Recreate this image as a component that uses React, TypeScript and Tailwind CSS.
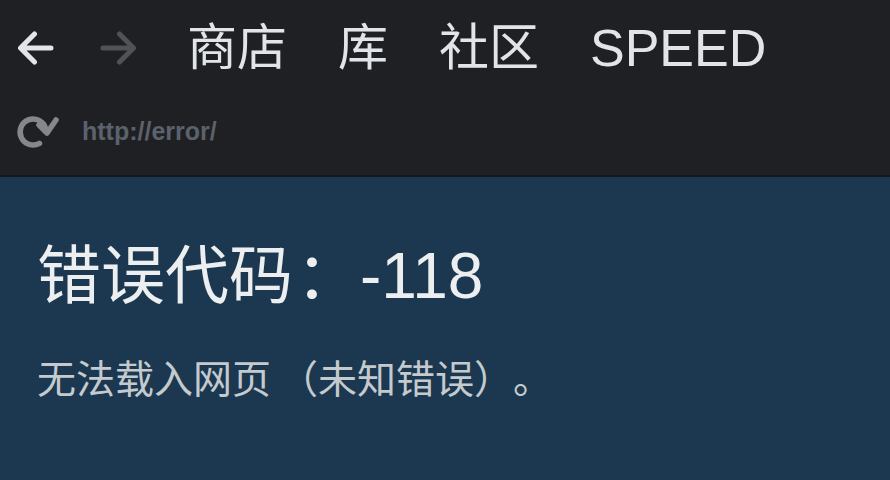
import React from 'react'

// ── Icons ─────────────────────────────────────────────────────────────────
function ArrowLeft({ className }: { className?: string }) {
  return (
    <svg viewBox="0 0 37 38" className={className} fill="none">
      <path
        d="M34 19H4M17.5 5L3.5 19L17.5 33"
        stroke="currentColor"
        strokeWidth="5"
        strokeLinecap="round"
        strokeLinejoin="round"
      />
    </svg>
  )
}

function ArrowRight({ className }: { className?: string }) {
  return (
    <svg viewBox="0 0 37 38" className={className} fill="none">
      <path
        d="M3 19H33M19.5 5L33.5 19L19.5 33"
        stroke="currentColor"
        strokeWidth="5"
        strokeLinecap="round"
        strokeLinejoin="round"
      />
    </svg>
  )
}

// clockwise reload: arc from lower right round to 3 o'clock, V head on the right
function Refresh({ className }: { className?: string }) {
  return (
    <svg viewBox="0 0 50 50" className={className} fill="none">
      <path
        d="M29.5 37.3A13 13 0 1 1 35.5 22"
        stroke="currentColor"
        strokeWidth="5.5"
        strokeLinecap="round"
      />
      <path
        d="M29 19L37 27L46 14"
        stroke="currentColor"
        strokeWidth="5.5"
        strokeLinecap="round"
        strokeLinejoin="round"
      />
    </svg>
  )
}

// ── Page ──────────────────────────────────────────────────────────────────
export default function App() {
  return (
    <div
      className="flex h-[480px] w-[890px] flex-col overflow-hidden bg-[#1b3850] [text-spacing-trim:space-all]"
      style={{ fontFamily: '"Liberation Sans", "Noto Sans CJK SC", sans-serif' }}
    >
      {/* Top bar */}
      <div className="h-[177px] shrink-0 border-b-2 border-[#15171a] bg-[#1f2023]">
        <div className="flex h-[96px] items-center pl-[17px]">
          <ArrowLeft className="h-[38px] w-[37px] text-[#e4e5e6]" />
          <ArrowRight className="ml-[46px] h-[38px] w-[37px] text-[#505255]" />
          <nav className="ml-[50px] flex items-center gap-[51px] text-[50px] leading-none text-[#e1e5e9]">
            <span>商店</span>
            <span>库</span>
            <span>社区</span>
            <span className="text-[52px]">SPEED</span>
          </nav>
        </div>
        <div className="flex h-[70px] items-center">
          <Refresh className="ml-[10px] h-[50px] w-[50px] text-[#85888b]" />
          <span className="ml-[22px] text-[25px] font-bold leading-none text-[#5b626b]">
            http://error/
          </span>
        </div>
      </div>

      {/* Error body */}
      <div className="flex flex-col pl-[37px] pt-[63px]">
        <h1 className="text-[64px] leading-[72px] text-[#eceef0]">
          错误代码<span className="pl-[3px]">：</span>-118
        </h1>
        <p className="mt-[46px] text-[39px] leading-[44px] text-[#c4cace]">
          无法载入网页<span className="pl-[8px]">（</span>未知错误）。
        </p>
      </div>
    </div>
  )
}
